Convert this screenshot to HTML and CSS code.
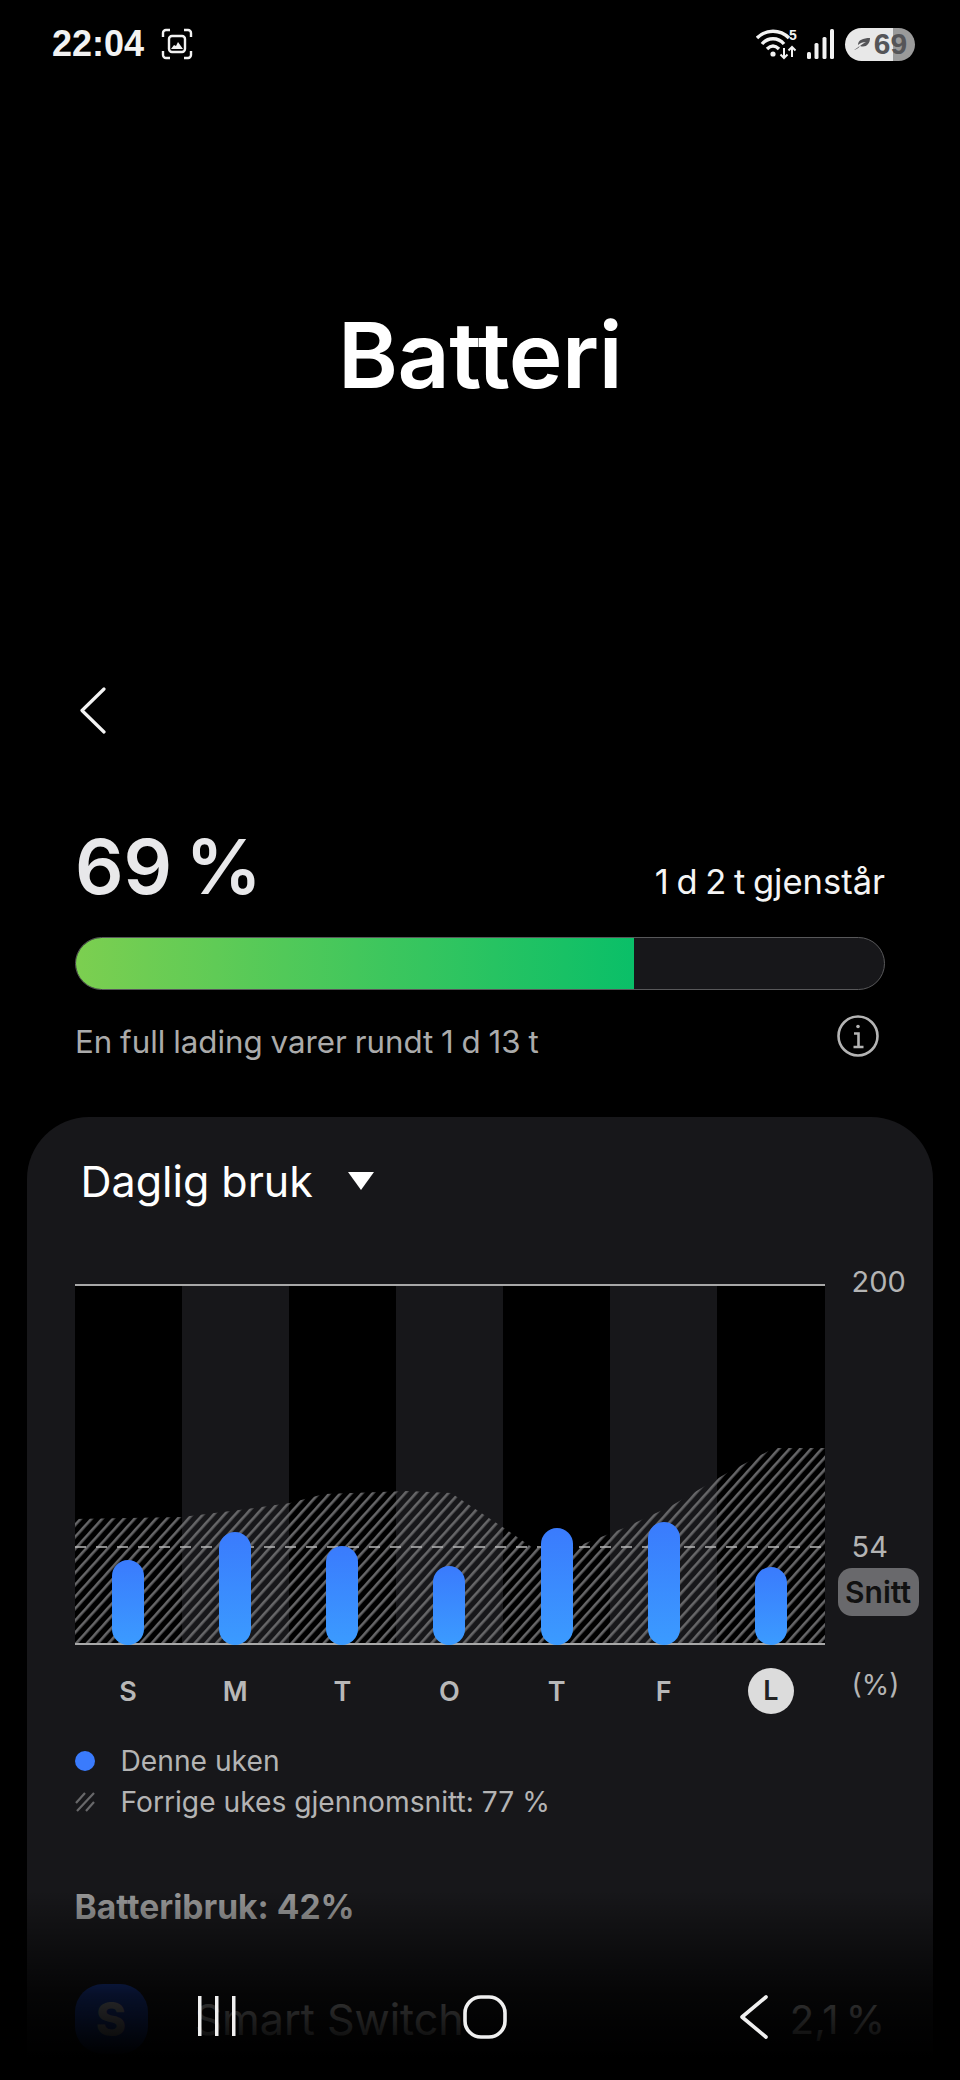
FILE: index.html
```html
<!DOCTYPE html>
<html lang="no">
<head>
    <meta charset="UTF-8">
    <meta name="viewport" content="width=device-width, initial-scale=1.0">
    <title>Batteri</title>
    <link rel="stylesheet" href="styles.css">
</head>
<body>
    <div class="screen">
        <div class="status">
            <span class="time">22:04</span>
            <svg class="shot-icon" width="32" height="32" viewBox="0 0 32 32" fill="none" stroke="#f2f2f2" stroke-width="2.4">
                <path d="M2 9V5a3 3 0 0 1 3-3h4M23 2h4a3 3 0 0 1 3 3v4M30 23v4a3 3 0 0 1-3 3h-4M9 30H5a3 3 0 0 1-3-3v-4"/>
                <rect x="8" y="8" width="16" height="16" rx="3"/>
                <path d="M10 21l3-4 2 1 2-4 5 7z" fill="#f2f2f2" stroke="none"/>
            </svg>
            <div class="status-right">
                <svg width="42" height="32" viewBox="0 0 42 32" fill="none" stroke="#f2f2f2">
                    <path d="M1 10C10 1 24 1 33 10" stroke-width="3.400"/>
                    <path d="M6 16C12 9 22 9 28 16" stroke-width="3.400"/>
                    <path d="M11 21C15 17 19 17 23 21" stroke-width="3.400"/>
                    <circle cx="17" cy="26" r="2.600" fill="#f2f2f2" stroke="none"/>
                    <path d="M28 20v10M24.500 26.500L28 30l3.500-3.500M36 29V19M32.500 22.500L36 19l3.500 3.500" stroke-width="2"/>
                    <text x="33" y="12" class="wifi-five" fill="#f2f2f2" stroke="none">5</text>
                </svg>
                <svg class="signal" width="28" height="30" viewBox="0 0 28 30" fill="#f2f2f2">
                    <rect x="0" y="23" width="4" height="7" rx="1.500"/>
                    <rect x="7.500" y="14" width="4" height="16" rx="1.500"/>
                    <rect x="15.500" y="8" width="4" height="22" rx="1.500"/>
                    <rect x="23" y="0" width="4" height="30" rx="1.500"/>
                </svg>
                <div class="pill">
                    <svg width="18" height="14" viewBox="0 0 18 14" fill="#555558">
                        <path d="M1 13C4 11 5 10 7 9C5 12 3 12 1 13zM5 8C5 3 10 1 17 1C17 7 13 11 7 9C9 7 11 6 13 5C10 5 7 6 5 8z"/>
                    </svg>
                    <span class="pill-num">69</span>
                </div>
            </div>
        </div>

        <h1 class="title">Batteri</h1>

        <div class="back">
            <svg width="26" height="47" viewBox="0 0 26 47" fill="none" stroke="#f4f4f4" stroke-width="3.200" stroke-linecap="round" stroke-linejoin="round">
                <path d="M24 2L2 23.500L24 45"/>
            </svg>
        </div>

        <div class="summary">
            <div class="summary-top">
                <span class="percent">69 %</span>
                <span class="left-text">1 d 2 t gjenstår</span>
            </div>
            <div class="track">
                <div class="track-fill" style="width: 69%"></div>
            </div>
            <div class="summary-note">
                <span class="note-text">En full lading varer rundt 1 d 13 t</span>
                <svg width="42" height="42" viewBox="0 0 42 42" fill="none" stroke="#b4b4b4" stroke-width="2.600">
                    <circle cx="21" cy="21" r="19.500"/>
                    <path d="M17 18.500h4.500V32M16.500 32h10"/>
                    <circle cx="21" cy="11.500" r="1.800" fill="#b4b4b4" stroke="none"/>
                </svg>
            </div>
        </div>

        <div class="panel">
            <div class="panel-head">
                <span>Daglig bruk</span>
                <span class="caret"></span>
            </div>

            <div class="chart-row">
                <div class="plot">
                    <div class="cols">
                        <div></div><div></div><div></div><div></div><div></div><div></div><div></div>
                    </div>
                    <svg class="hatch" width="750" height="361" viewBox="0 0 750 361">
                        <defs>
                            <pattern id="stripes" patternUnits="userSpaceOnUse" width="8" height="8" patternTransform="rotate(42)">
                                <rect x="0" y="0" width="2.600" height="8" fill="#666668"/>
                            </pattern>
                        </defs>
                        <polygon fill="url(#stripes)" points="0,235 107,233 172,225 215,219 249,210 333,207 376,209 429,244 458,264 498,264 549,244 596,222 652,189 699,164 750,164 750,361 0,361"/>
                        <line x1="0" y1="263" x2="750" y2="263" stroke="#b8b8b8" stroke-width="1.500" stroke-dasharray="11 10"/>
                    </svg>
                    <div class="bars">
                        <div class="bar" style="height: 85px"></div>
                        <div class="bar" style="height: 113px"></div>
                        <div class="bar" style="height: 99px"></div>
                        <div class="bar" style="height: 79px"></div>
                        <div class="bar" style="height: 117px"></div>
                        <div class="bar" style="height: 123px"></div>
                        <div class="bar" style="height: 78px"></div>
                    </div>
                </div>
                <div class="axis">
                    <span class="axis-top">200</span>
                    <span class="axis-avg">54</span>
                    <span class="snitt">Snitt</span>
                </div>
            </div>

            <div class="days-row">
                <div class="days">
                    <span>S</span><span>M</span><span>T</span><span>O</span><span>T</span><span>F</span><span class="today">L</span>
                </div>
                <span class="unit">(%)</span>
            </div>

            <div class="legend">
                <div class="legend-item">
                    <span class="dot"></span>
                    <span>Denne uken</span>
                </div>
                <div class="legend-item">
                    <svg class="legend-hatch" width="20" height="20" viewBox="0 0 20 20" stroke="#68686a" stroke-width="2.200">
                        <path d="M1 11L10 1M2 19L19 1M11 19L19 10"/>
                    </svg>
                    <span>Forrige ukes gjennomsnitt: 77 %</span>
                </div>
            </div>

            <div class="usage-title">Batteribruk: 42%</div>

            <div class="app-row">
                <div class="app-icon">S</div>
                <span class="app-name">Smart Switch</span>
                <span class="app-value">2,1 %</span>
            </div>
        </div>

        <div class="fade"></div>

        <div class="nav">
            <svg class="nav-recent" width="40" height="42" viewBox="0 0 40 42" fill="#f0f0f0">
                <rect x="1" y="1" width="3.500" height="40"/>
                <rect x="18" y="1" width="3.500" height="40"/>
                <rect x="35" y="1" width="3.500" height="40"/>
            </svg>
            <svg class="nav-home" width="44" height="44" viewBox="0 0 44 44" fill="none" stroke="#f0f0f0" stroke-width="3.600">
                <rect x="2" y="2" width="40" height="40" rx="16"/>
            </svg>
            <svg class="nav-back" width="28" height="44" viewBox="0 0 28 44" fill="none" stroke="#f0f0f0" stroke-width="3.600" stroke-linecap="round" stroke-linejoin="round">
                <path d="M26 2L2 22L26 42"/>
            </svg>
        </div>
    </div>
</body>
</html>
```

FILE: styles.css
```css
html, body {
    margin: 0;
    background-color: #000;
}
body {
    font-family: Inter, "Noto Sans", sans-serif;
    color: #f4f4f4;
}
.screen {
    position: relative;
    width: 960px;
    height: 2080px;
    overflow: hidden;
    background-color: #000;
}

/* status bar */
.status {
    display: flex;
    align-items: center;
    height: 88px;
    padding: 0 45px 0 52px;
    box-sizing: border-box;
}
.time {
    font-family: "Liberation Sans", sans-serif;
    font-size: 36px;
    font-weight: 700;
    color: #f2f2f2;
}
.shot-icon {
    margin-left: 17px;
}
.status-right {
    display: flex;
    align-items: center;
    margin-left: auto;
}
.wifi-five {
    font-family: "Liberation Sans", sans-serif;
    font-size: 14px;
    font-weight: 700;
}
.signal {
    margin-left: 9px;
}
.pill {
    display: flex;
    align-items: center;
    justify-content: center;
    gap: 3px;
    width: 70px;
    height: 33px;
    margin-left: 10px;
    border-radius: 17px;
    background: linear-gradient(90deg, #e8e8e8 68%, #9a9a9a 68%);
}
.pill-num {
    font-family: "Liberation Sans", sans-serif;
    font-size: 30px;
    font-weight: 700;
    color: #555558;
}

/* title */
.title {
    margin: 0;
    padding-top: 217px;
    font-size: 91px;
    line-height: 100px;
    font-weight: 600;
    letter-spacing: -0.5px;
    text-align: center;
    color: #fff;
}
.back {
    display: flex;
    height: 47px;
    margin-top: 282px;
    padding-left: 80px;
}

/* battery summary */
.summary {
    padding: 0 75px;
}
.summary-top {
    display: flex;
    justify-content: space-between;
    align-items: baseline;
    margin-top: 90px;
}
.percent {
    font-size: 76px;
    line-height: 84px;
    font-weight: 600;
    word-spacing: -6px;
    color: #e8e8ea;
}
.left-text {
    font-size: 34.500px;
    word-spacing: -2px;
}
.track {
    height: 53px;
    margin-top: 29px;
    box-sizing: border-box;
    overflow: hidden;
    border: 1px solid #58585a;
    border-radius: 27px;
    background-color: #17171a;
}
.track-fill {
    height: 100%;
    background: linear-gradient(90deg, #7ccf50, #0abf68);
}
.summary-note {
    display: flex;
    justify-content: space-between;
    align-items: flex-start;
    margin-top: 25px;
    padding-right: 6px;
    font-size: 31.300px;
    word-spacing: -1px;
    color: #ababab;
}
.note-text {
    margin-top: 8px;
}

/* daily usage card */
.panel {
    width: 906px;
    height: 1000px;
    margin: 56px 0 0 27px;
    padding: 0 0 0 47.500px;
    box-sizing: border-box;
    border-radius: 62px 62px 0 0;
    background-color: #17171a;
}
.panel-head {
    display: flex;
    align-items: center;
    height: 128px;
    padding-left: 6px;
    font-size: 43px;
    color: #fff;
}
.caret {
    width: 0;
    height: 0;
    margin-left: 35px;
    border-left: 13px solid transparent;
    border-right: 13px solid transparent;
    border-top: 18px solid #fff;
}
.chart-row {
    display: flex;
    margin-top: 39px;
}
.plot {
    position: relative;
    width: 750px;
    height: 361px;
    flex: none;
}
.cols, .bars {
    position: absolute;
    inset: 0;
    display: grid;
    grid-template-columns: repeat(7, 1fr);
}
.cols div:nth-child(odd) {
    background-color: #000;
}
.plot::before, .plot::after {
    content: "";
    position: absolute;
    left: 0;
    right: 0;
    height: 2px;
    background-color: #a8a8a8;
    z-index: 2;
}
.plot::before {
    top: 0;
}
.plot::after {
    bottom: 0;
}
.hatch {
    position: absolute;
    left: 0;
    top: 0;
}
.bars {
    align-items: end;
    justify-items: center;
}
.bar {
    width: 32px;
    border-radius: 16px;
    background: linear-gradient(180deg, #3a7bfd, #3b9bff);
    z-index: 3;
}
.axis {
    position: relative;
    flex: 1;
    font-size: 29px;
    color: #b4b4b4;
}
.axis span {
    position: absolute;
}
.axis-top {
    left: 27px;
    top: -20px;
}
.axis-avg {
    left: 27px;
    top: 245px;
}
.axis .snitt {
    left: 13px;
    top: 284px;
    width: 81px;
    height: 48px;
    line-height: 48px;
    font-size: 30px;
    text-align: center;
    border-radius: 14px;
    background-color: #69696c;
    font-weight: 600;
    color: #111;
}
.days-row {
    display: flex;
    align-items: center;
    height: 48px;
    margin-top: 22px;
}
.days {
    display: grid;
    grid-template-columns: repeat(7, 1fr);
    justify-items: center;
    align-items: center;
    width: 750px;
    font-size: 27px;
    font-weight: 600;
    color: #b8b8b8;
}
.today {
    width: 46px;
    height: 46px;
    line-height: 46px;
    text-align: center;
    border-radius: 50%;
    background-color: #dcdcdc;
    color: #222;
}
.unit {
    margin: -12px 0 0 27px;
    font-size: 28px;
    color: #b4b4b4;
}
.legend {
    display: flex;
    flex-direction: column;
    gap: 5px;
    margin-top: 28px;
    font-size: 28.200px;
    line-height: 36px;
    color: #b4b4b4;
}
.legend-item {
    display: flex;
    align-items: center;
    gap: 26px;
}
.dot {
    width: 20px;
    height: 20px;
    border-radius: 50%;
    background-color: #3a7bfd;
}
.usage-title {
    margin-top: 67px;
    font-size: 33.600px;
    line-height: 40px;
    font-weight: 700;
    color: #999;
}
.app-row {
    display: flex;
    align-items: center;
    height: 70px;
    margin-top: 57px;
    padding-right: 48px;
}
.app-icon {
    width: 73px;
    height: 70px;
    border-radius: 28px;
    background-color: #1f47b8;
    font-size: 46px;
    line-height: 70px;
    font-weight: 800;
    text-align: center;
    color: #b0b0b8;
}
.app-name {
    margin-left: 47px;
    font-size: 43px;
    color: #e8e8e8;
}
.app-value {
    margin-left: auto;
    font-size: 40px;
    word-spacing: -4px;
    color: #e8e8e8;
}

/* bottom fade and nav buttons, these lie over the list */
.fade {
    position: absolute;
    left: 0;
    right: 0;
    bottom: 0;
    height: 190px;
    background: linear-gradient(180deg, rgba(0,0,0,0), rgba(0,0,0,0.78) 55%, #000 88%);
}
.nav {
    position: absolute;
    left: 0;
    right: 0;
    top: 1995px;
    height: 44px;
}
.nav svg {
    position: absolute;
    top: 0;
}
.nav-recent {
    left: 197px;
}
.nav-home {
    left: 463px;
}
.nav-back {
    left: 740px;
}
```
